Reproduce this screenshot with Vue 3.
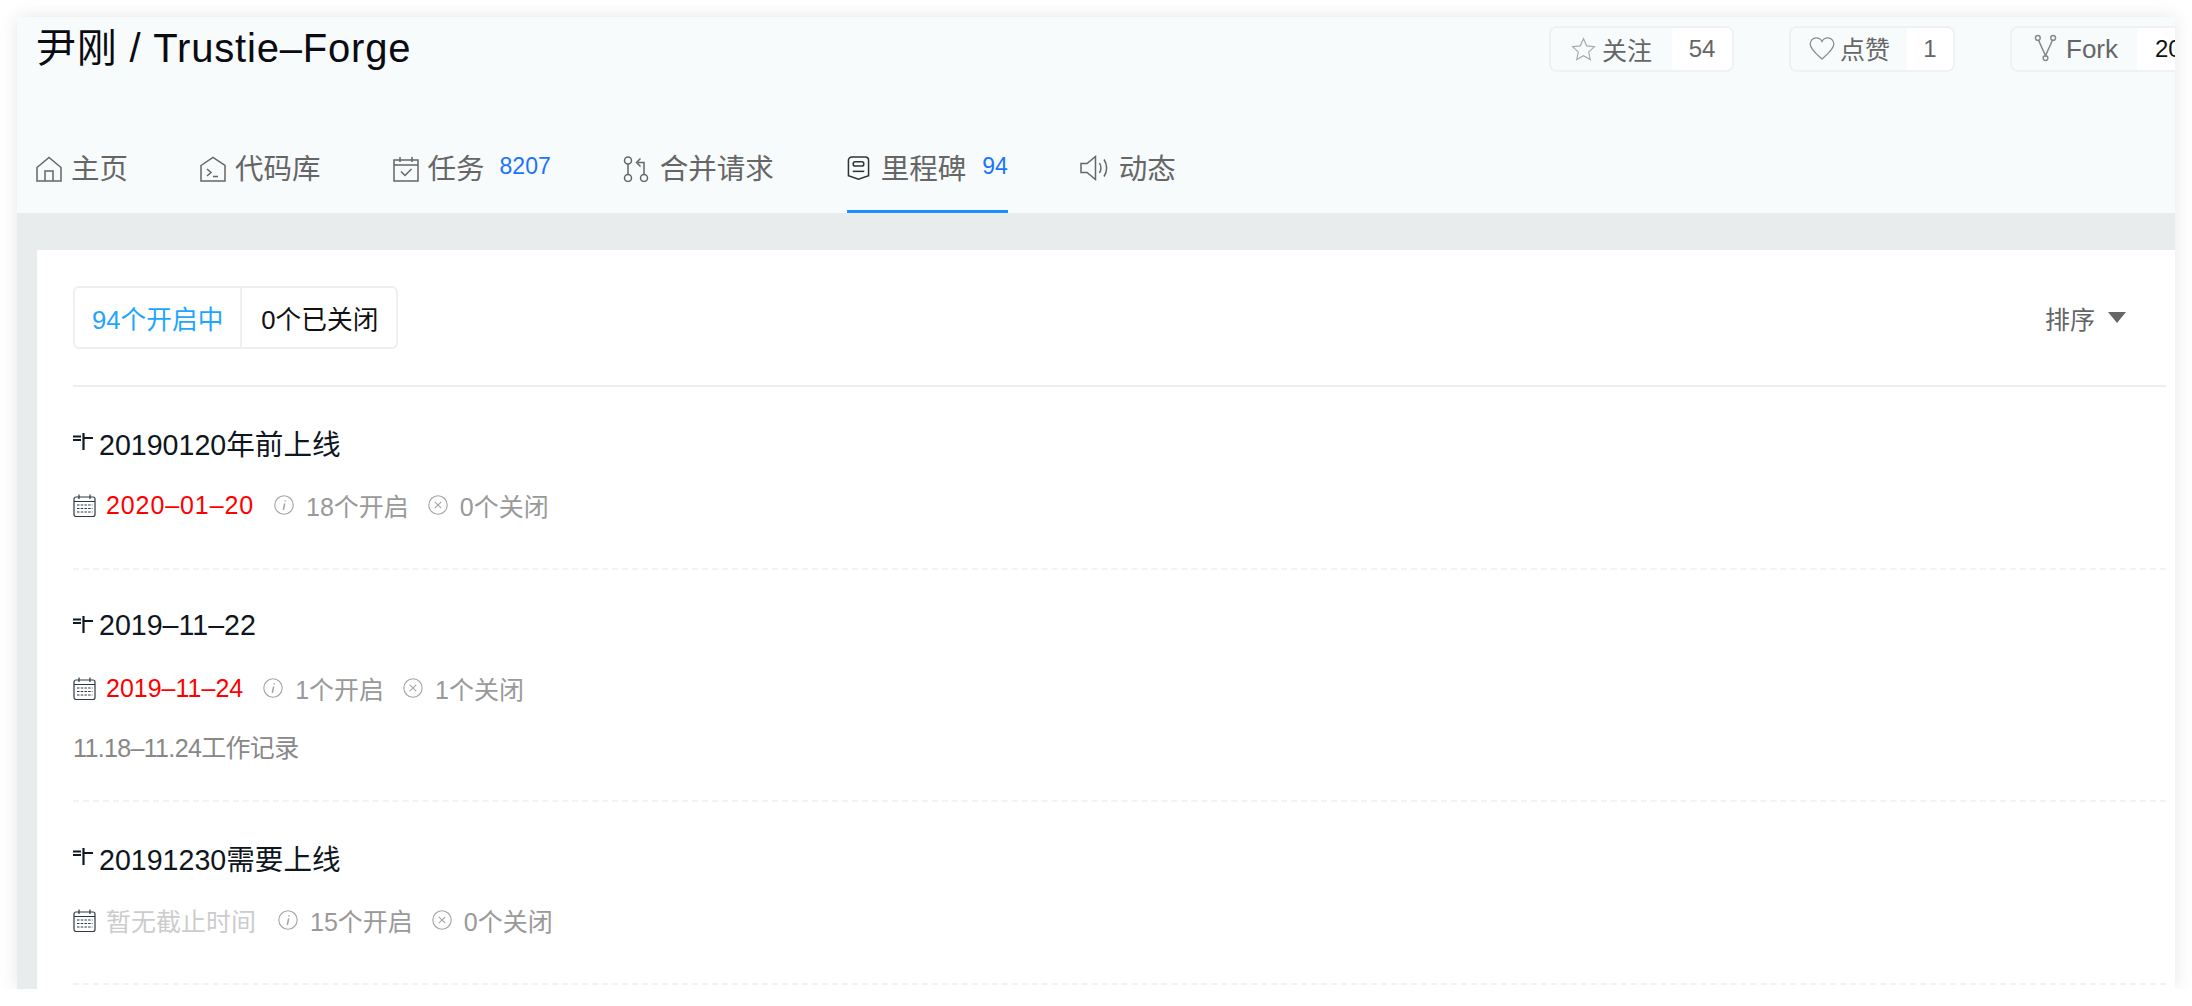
<script setup>
const milestones = [
  { title: '20190120年前上线', date: '2020–01–20', dateClass: 'late', open: '18个开启', closed: '0个关闭', desc: '' },
  { title: '2019–11–22', date: '2019–11–24', dateClass: 'late tight', open: '1个开启', closed: '1个关闭', desc: '11.18–11.24工作记录' },
  { title: '20191230需要上线', date: '暂无截止时间', dateClass: 'none', open: '15个开启', closed: '0个关闭', desc: '' }
]
</script>

<template>
  <div class="window">
    <header class="head">
      <div class="top">
        <h1 class="title">尹刚 / Trustie–Forge</h1>
        <div class="ops">
          <div class="op op-watch">
            <span class="op-main">
              <svg class="op-icon" viewBox="0 0 24 24" fill="none" stroke="#a8a8a8" stroke-width="1.1"><path d="M12 1.600l3.100 6.900 7.400.8-5.500 5 1.500 7.400L12 18l-6.500 3.700L7 14.300l-5.500-5 7.400-.8z"/></svg>
              <span>关注</span>
            </span>
            <span class="op-num">54</span>
          </div>
          <div class="op op-like">
            <span class="op-main">
              <svg class="op-icon heart" viewBox="0 0 26 24" fill="none" stroke="#8c8c8c" stroke-width="1.3"><path d="M13 22.500C8 18 1.200 13 1.200 7.600 1.200 4 4 1.400 7.200 1.400c2.400 0 4.600 1.300 5.800 3.600 1.200-2.300 3.400-3.600 5.800-3.600 3.200 0 6 2.600 6 6.200C24.800 13 18 18 13 22.500z"/></svg>
              <span class="like-text">点赞</span>
            </span>
            <span class="op-num">1</span>
          </div>
          <div class="op op-fork">
            <span class="op-main">
              <svg class="op-icon fork" viewBox="0 0 24 28" fill="none" stroke="#888" stroke-width="1.5"><circle cx="4" cy="3.500" r="2.500"/><circle cx="20" cy="3.500" r="2.500"/><circle cx="12" cy="24.500" r="2.500"/><path d="M4.800 6l7.200 16 7.200-16"/></svg>
              <span class="fork-text">Fork</span>
            </span>
            <span class="op-num dark">20</span>
          </div>
        </div>
      </div>
      <nav class="nav">
        <a class="tab">
          <svg class="tab-icon" viewBox="0 0 26 26" fill="none" stroke="#666" stroke-width="1.5"><path d="M1 11.500L13 1.500l12 10V25H1zM9 25V15h8v10"/></svg>
          <span>主页</span>
        </a>
        <a class="tab">
          <svg class="tab-icon" viewBox="0 0 26 26" fill="none" stroke="#666" stroke-width="1.5"><path d="M1 9.500L13 1.500l12 8V25H1zM7 13l4 3.500-4 3.500M13 20.500h5"/></svg>
          <span>代码库</span>
        </a>
        <a class="tab">
          <svg class="tab-icon" viewBox="0 0 26 26" fill="none" stroke="#666" stroke-width="1.5"><path d="M1 4h24v21H1zM1 9h24M7 1v5M19 1v5M12 4h2M8 15.500l4 4 6.500-6.500"/></svg>
          <span>任务</span>
          <span class="count">8207</span>
        </a>
        <a class="tab tab-merge">
          <svg class="tab-icon" viewBox="0 0 26 26" fill="none" stroke="#666" stroke-width="1.5"><circle cx="5" cy="4.500" r="3.500"/><circle cx="5" cy="22" r="3.500"/><circle cx="21" cy="22" r="3.500"/><path d="M5 8v10.500M21 18.500V6.500h-6M17.500 2.500L13.500 6.500l4 4"/></svg>
          <span>合并请求</span>
        </a>
        <a class="tab active">
          <svg class="tab-icon" viewBox="0 0 24 26" fill="none" stroke="#333" stroke-width="1.6"><path d="M5 1.500h14a3.500 3.500 0 0 1 3.500 3.500v16L12 24.800 1.500 21V5A3.500 3.500 0 0 1 5 1.500z"/><rect x="6.500" y="6.500" width="11" height="4.500" rx="2"/><path d="M6 16.500h12"/></svg>
          <span>里程碑</span>
          <span class="count">94</span>
        </a>
        <a class="tab">
          <svg class="tab-icon speaker" viewBox="0 0 30 26" fill="none" stroke="#666" stroke-width="1.5"><path d="M1 8.500h6L15.500 1.500v23L7 17.500H1zM19.500 8c1.700 3 1.700 7 0 10M24 4.500c3.500 5 3.500 12 0 17"/></svg>
          <span>动态</span>
        </a>
      </nav>
    </header>

    <main class="body">
      <section class="card">
        <div class="bar">
          <div class="seg">
            <span class="seg-item on">94个开启中</span>
            <span class="seg-item">0个已关闭</span>
          </div>
          <div class="sort">
            <span>排序</span>
            <i class="caret"></i>
          </div>
        </div>

        <article v-for="m in milestones" :key="m.title" class="item" :class="{ 'has-desc': m.desc }">
          <div class="item-title">
            <svg class="flag" viewBox="0 0 20 17" fill="none" stroke="#101822" stroke-width="2.2"><path d="M0 3.500h8M0 7h8M10.500 0v17M10.500 5H20"/></svg>
            <span>{{ m.title }}</span>
          </div>
          <div class="meta">
            <svg class="cal" viewBox="0 0 23 23" fill="none" stroke="#2f3842" stroke-width="1.2"><path d="M3 3h17a2 2 0 0 1 2 2v15.500a2 2 0 0 1-2 2H3a2 2 0 0 1-2-2V5a2 2 0 0 1 2-2zM6 .5V5M17 .5V5M1 7.500h21"/><path stroke-dasharray="2.500 1.200" stroke-width="1.1" d="M4 11h15.500M4 14.500h15.500M4 18h15.500"/></svg>
            <span class="date" :class="m.dateClass">{{ m.date }}</span>
            <svg class="round first" viewBox="0 0 20 20" fill="none" stroke="#a5a5a5" stroke-width="1.1"><circle cx="10" cy="10" r="9.200"/><path stroke-width="1.5" d="M10.700 8.500l-1.400 6.500M11.100 5.200v1.300"/></svg>
            <span>{{ m.open }}</span>
            <svg class="round" viewBox="0 0 20 20" fill="none" stroke="#a5a5a5" stroke-width="1.1"><circle cx="10" cy="10" r="9.200"/><path d="M6.800 6.800l6.400 6.400M13.200 6.800l-6.400 6.400"/></svg>
            <span>{{ m.closed }}</span>
          </div>
          <p v-if="m.desc" class="desc">{{ m.desc }}</p>
        </article>
      </section>
    </main>
  </div>
</template>

<style>
html, body { background: #fff; overflow: hidden; }
</style>

<style scoped>
.window {
  width: 2158px;
  height: 972px;
  margin: 17px 0 0 17px;
  display: flex;
  flex-direction: column;
  overflow: hidden;
  background: #e8ecec;
  box-shadow: 0 0 18px rgba(0, 0, 0, .1);
  font-family: "Liberation Sans", "Noto Sans CJK SC", sans-serif;
  color: #666;
}
.head {
  height: 196px;
  flex: none;
  background: #f8fbfc;
  padding-left: 19px;
  display: flex;
  flex-direction: column;
  justify-content: space-between;
}
.top { display: flex; justify-content: space-between; }
.title {
  margin: 6px 0 0;
  font-size: 40px;
  line-height: 50px;
  font-weight: 400;
  letter-spacing: .8px;
  color: #0b0b12;
}
.ops {
  width: 626px;
  margin-top: 9px;
  display: flex;
  gap: 55px;
  flex: none;
  overflow: hidden;
}
.op {
  height: 46px;
  box-sizing: border-box;
  flex: none;
  display: flex;
  border: 2px solid #eff1f3;
  border-radius: 8px;
  font-size: 25px;
  color: #666;
  overflow: hidden;
}
.op-main { display: flex; align-items: center; gap: 7px; padding-left: 20px; box-sizing: border-box; }
.op-num {
  background: #fff;
  font-size: 24px;
  display: flex;
  align-items: center;
  justify-content: center;
  line-height: 1;
}
.op-watch { width: 185px; }
.op-watch .op-main { width: 121px; padding-left: 20px; gap: 6px; }
.op-watch .op-main span { margin-top: -1px; }
.op-watch .op-num { flex: 1; }
.op-like { width: 166px; }
.op-like .op-main { width: 116px; padding-left: 18px; gap: 5px; }
.op-like .op-num { flex: 1; }
.op-fork { width: 220px; }
.op-fork .op-main { width: 125px; padding-left: 22px; gap: 9px; }
.op-fork .op-num { flex: 1; justify-content: flex-start; padding-left: 18px; }
.op-icon { width: 25px; height: 25px; flex: none; }
.heart { width: 26px; height: 25px; margin-top: -2px; }
.like-text { margin-top: -3px; }
.fork { width: 23px; height: 28px; margin-top: -2px; }
.fork-text { margin-top: 1px; font-size: 26px; }
.dark { color: #111; }

.nav { display: flex; gap: 72px; height: 72px; align-items: stretch; }
.tab {
  display: flex;
  align-items: center;
  gap: 9px;
  font-size: 28.500px;
  color: #666;
  padding-bottom: 19px;
  box-sizing: border-box;
  border-bottom: 3px solid transparent;
}
.tab.active { border-bottom-color: #1890ff; gap: 11px; margin-left: 1px; }
.tab-merge { gap: 11px; }
.tab-icon { width: 26px; height: 26px; flex: none; margin-top: 5px; }
.active .tab-icon { width: 23px; height: 26px; margin-top: 4px; }
.speaker { width: 30px; margin-top: 4px; }
.count { font-size: 23px; color: #1a73ff; margin-left: 6px; margin-top: 1px; }
.active .count { margin-left: 5px; }

.body { flex: 1; min-height: 0; padding: 37px 0 0 20px; }
.card { height: 100%; background: #fff; padding: 0 9px 0 36px; overflow: hidden; }
.bar {
  display: flex;
  justify-content: space-between;
  align-items: center;
  padding: 36px 0 36px;
  border-bottom: 2px solid #eeeeee;
}
.seg { display: flex; height: 63px; box-sizing: border-box; border: 2px solid #eeeff1; border-radius: 6px; font-size: 25.700px; color: #111; }
.seg-item { display: flex; align-items: center; padding: 0 18px 0 19px; }
.seg-item.on { color: #1ea5ff; border-right: 2px solid #eeeff1; padding: 0 17px; }
.sort { display: flex; align-items: center; gap: 13px; font-size: 25px; color: #666; padding-right: 40px; }
.caret { width: 0; height: 0; border: 9px solid transparent; border-top: 11px solid #666; border-bottom: 0; margin-top: -1px; }

.item { padding: 39px 0 38px; border-bottom: 2px dashed #f3f3f3; }
.item.has-desc { padding-bottom: 36px; }
.item-title { display: flex; align-items: center; gap: 6px; height: 32px; font-size: 28.600px; color: #0e1620; }
.flag { width: 20px; height: 17px; margin-top: -2px; flex: none; }
.meta { margin: 31px 0 9px; display: flex; align-items: center; height: 32px; font-size: 25px; color: #999; }
.cal { width: 23px; height: 23px; margin-right: 10px; flex: none; }
.date.late { color: #f00; letter-spacing: .9px; }
.date.tight { letter-spacing: 0; }
.date.none { color: #ccc; margin-right: 2px; }
.round { width: 20px; height: 20px; margin: 0 12px 0 19px; flex: none; }
.round.first { margin-left: 20px; }
.desc { margin: 28px 0 0; height: 32px; line-height: 32px; font-size: 25px; letter-spacing: -.65px; color: #888; }
</style>
